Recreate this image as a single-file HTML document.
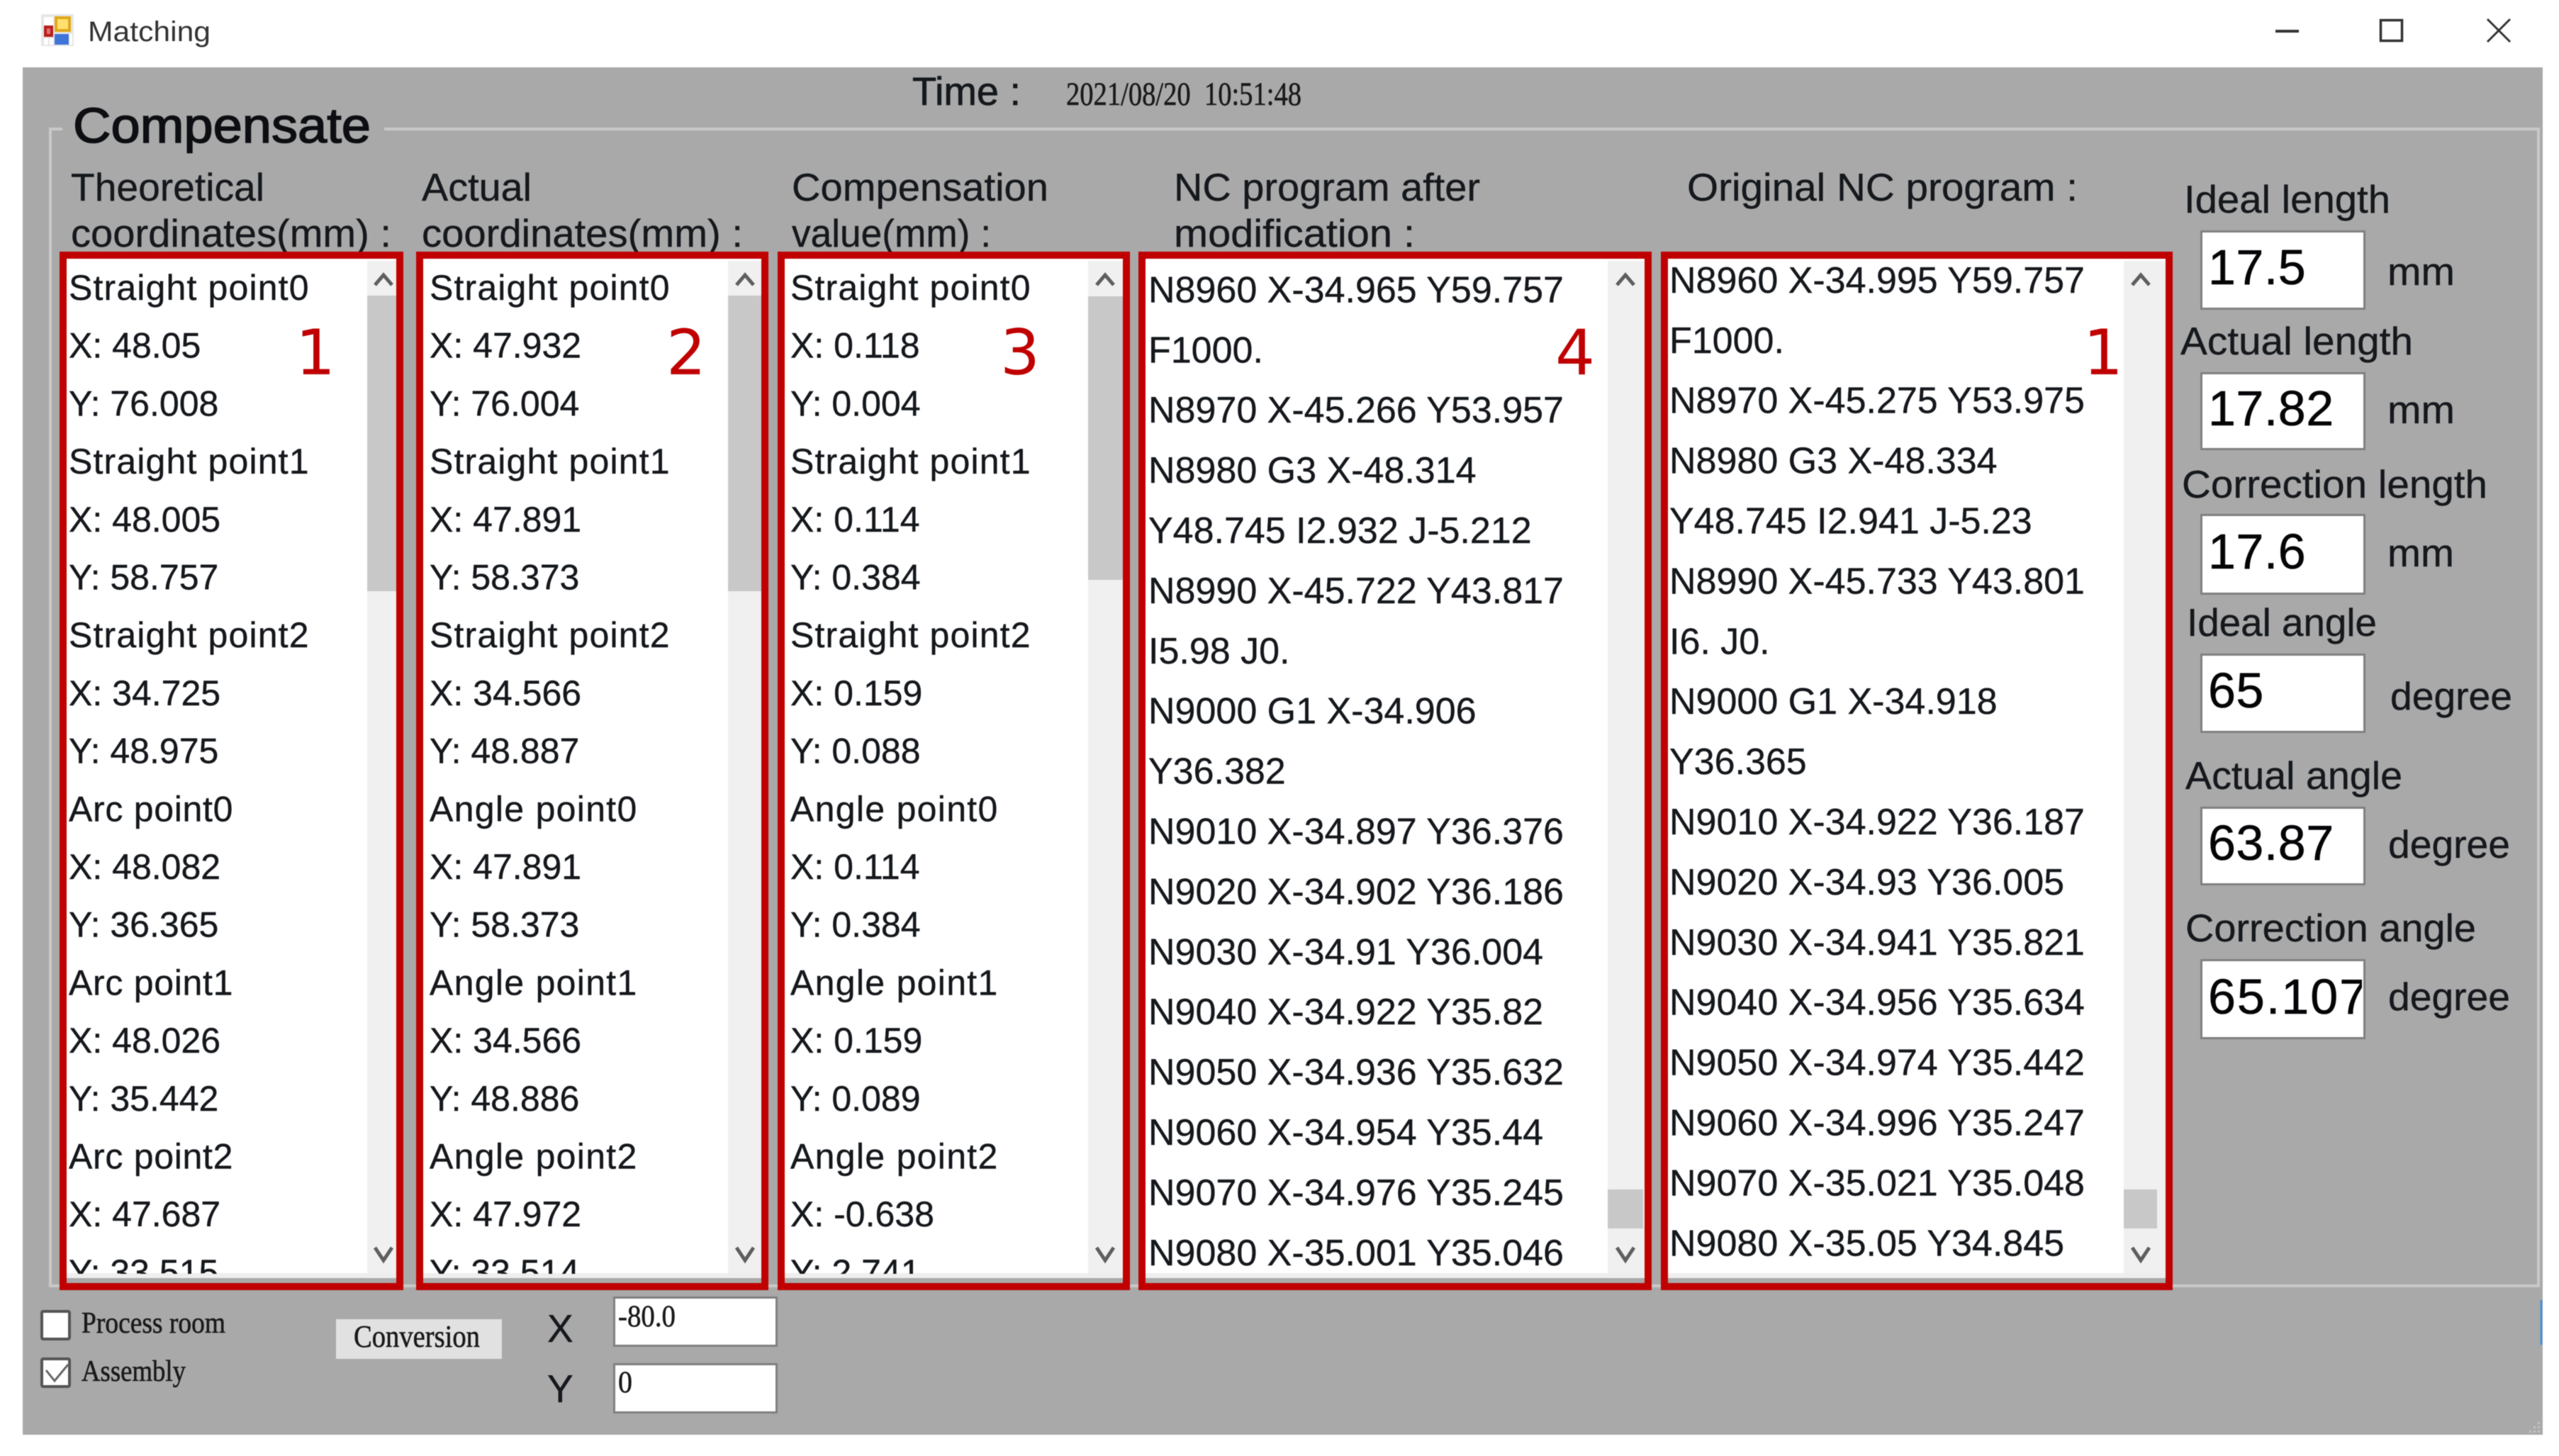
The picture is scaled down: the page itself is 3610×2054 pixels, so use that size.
<!DOCTYPE html>
<html>
<head>
<meta charset="utf-8">
<title>Matching</title>
<style>
html,body{margin:0;padding:0;background:#fff;width:3610px;height:2054px;overflow:hidden}
svg{display:block;filter:blur(.6px)}
text{font-family:"Liberation Sans",sans-serif;fill:#15181c;white-space:pre}
.s{font-family:"Liberation Serif",serif;fill:#1a1a1a;stroke:#1a1a1a;stroke-width:.6px}
.h{font-size:55px;stroke:#15181c;stroke-width:.4px}
.l{font-size:50px;stroke:#15181c;stroke-width:.4px}
.n{font-size:52px;stroke:#15181c;stroke-width:.4px}
.v{font-size:70px;fill:#050508;stroke:#050508;stroke-width:.6px}
.r{font-family:"DejaVu Sans",sans-serif;font-size:88px;fill:#c00000}
.a{letter-spacing:1.15px}
.b{letter-spacing:.7px}
.c{letter-spacing:1.3px}
</style>
</head>
<body>
<svg xmlns="http://www.w3.org/2000/svg" width="3610" height="2054" viewBox="0 0 3610 2054">
<defs>
<clipPath id="c1"><rect x="92" y="364" width="426" height="1433"/></clipPath>
<clipPath id="c2"><rect x="597" y="364" width="430" height="1433"/></clipPath>
<clipPath id="c3"><rect x="1107" y="364" width="428" height="1433"/></clipPath>
<clipPath id="c4"><rect x="1616" y="364" width="652" height="1433"/></clipPath>
<clipPath id="c5"><rect x="2353" y="364" width="643" height="1433"/></clipPath>
<clipPath id="c6"><rect x="3107" y="1356" width="225" height="107"/></clipPath>
</defs>

<!-- title bar -->
<rect x="0" y="0" width="3610" height="95" fill="#fff"/>
<rect x="58" y="20" width="46" height="45" fill="#e6e6e6"/>
<rect x="62" y="24" width="13" height="12" fill="#fff"/>
<rect x="62" y="36" width="13" height="16" fill="#b81c1c"/>
<rect x="66" y="40" width="5" height="8" fill="#e07070"/>
<rect x="62" y="54" width="6" height="9" fill="#fff"/>
<rect x="70" y="54" width="5" height="9" fill="#fff"/>
<rect x="77" y="23" width="23" height="22" fill="#e0a818"/>
<rect x="81" y="27" width="15" height="14" fill="#ffdf70"/>
<rect x="77" y="48" width="20" height="15" fill="#3f74d8"/>
<rect x="98" y="48" width="4" height="15" fill="#fff"/>
<text x="124" y="58" font-size="40" textLength="173" lengthAdjust="spacingAndGlyphs" style="fill:#333">Matching</text>
<path d="M3210 44H3243" stroke="#333" stroke-width="4" fill="none"/>
<rect x="3358.500" y="28.500" width="30" height="29" fill="none" stroke="#333" stroke-width="3.500"/>
<path d="M3509 27L3541 59M3541 27L3509 59" stroke="#333" stroke-width="3" fill="none"/>

<!-- form body -->
<rect x="32" y="95" width="3555" height="1929" fill="#a9a9a9"/>
<path d="M3585 1834V1897" stroke="#4a90d9" stroke-width="3"/>

<!-- group box -->
<path d="M88 182H71V1814H3581V182H542" fill="none" stroke="#c9c9c9" stroke-width="4"/>
<text x="103" y="201" font-size="70" textLength="420" lengthAdjust="spacingAndGlyphs" style="stroke:#0c0e12;stroke-width:1.6px;fill:#0c0e12">Compensate</text>

<text x="1287" y="148" font-size="56" textLength="153" lengthAdjust="spacingAndGlyphs" style="stroke:#15181c;stroke-width:.8px">Time :</text>
<text class="s" x="1504" y="148" font-size="47" textLength="332" lengthAdjust="spacingAndGlyphs">2021/08/20  10:51:48</text>

<!-- headers -->
<text class="h" x="100" y="283" textLength="273" lengthAdjust="spacingAndGlyphs">Theoretical</text>
<text class="h" x="100" y="348" textLength="452" lengthAdjust="spacingAndGlyphs">coordinates(mm) :</text>
<text class="h" x="595" y="283" textLength="155" lengthAdjust="spacingAndGlyphs">Actual</text>
<text class="h" x="595" y="348" textLength="453" lengthAdjust="spacingAndGlyphs">coordinates(mm) :</text>
<text class="h" x="1117" y="283" textLength="362" lengthAdjust="spacingAndGlyphs">Compensation</text>
<text class="h" x="1117" y="348" textLength="281" lengthAdjust="spacingAndGlyphs">value(mm) :</text>
<text class="h" x="1656" y="283" textLength="432" lengthAdjust="spacingAndGlyphs">NC program after</text>
<text class="h" x="1656" y="348" textLength="340" lengthAdjust="spacingAndGlyphs">modification :</text>
<text class="h" x="2380" y="283" textLength="551" lengthAdjust="spacingAndGlyphs">Original NC program :</text>

<!-- list whites -->
<rect x="94" y="364" width="465" height="1439" fill="#fff"/>
<rect x="597" y="364" width="477" height="1439" fill="#fff"/>
<rect x="1107" y="364" width="477" height="1439" fill="#fff"/>
<rect x="1616" y="364" width="704" height="1439" fill="#fff"/>
<rect x="2353" y="364" width="702" height="1439" fill="#fff"/>

<!-- bottom strips -->
<g fill="#eeeeee">
<rect x="94" y="1796" width="465" height="7"/>
<rect x="597" y="1796" width="477" height="7"/>
<rect x="1107" y="1796" width="477" height="7"/>
<rect x="1616" y="1796" width="704" height="7"/>
<rect x="2353" y="1796" width="702" height="7"/>
</g>

<!-- scrollbars -->
<g fill="#f0f0f0">
<rect x="518" y="368" width="41" height="1428"/>
<rect x="1027" y="368" width="47" height="1428"/>
<rect x="1535" y="368" width="49" height="1428"/>
<rect x="2268" y="368" width="52" height="1428"/>
<rect x="2996" y="368" width="59" height="1428"/>
</g>
<g fill="#c8c8c8">
<rect x="518" y="417" width="41" height="417"/>
<rect x="1027" y="417" width="47" height="417"/>
<rect x="1535" y="418" width="49" height="400"/>
<rect x="2268" y="1678" width="50" height="55"/>
<rect x="2996" y="1678" width="47" height="55"/>
</g>
<g fill="none" stroke="#5e5e5e" stroke-width="5">
<path d="M529 402L541 388L553 402M529 1760L541 1778L553 1760"/>
<path d="M1039 402L1051 388L1063 402M1039 1760L1051 1778L1063 1760"/>
<path d="M1547 402L1559 388L1571 402M1547 1760L1559 1778L1571 1760"/>
<path d="M2281 402L2293 388L2305 402M2281 1760L2293 1778L2305 1760"/>
<path d="M3008 402L3020 388L3032 402M3008 1760L3020 1778L3032 1760"/>
</g>

<!-- list 1 -->
<g clip-path="url(#c1)">
<text class="l" x="97" y="341.300">
<tspan class="a" x="97" dy="81.700">Straight point0</tspan><tspan x="97" dy="81.700">X: 48.05</tspan><tspan x="97" dy="81.700">Y: 76.008</tspan><tspan class="a" x="97" dy="81.700">Straight point1</tspan><tspan x="97" dy="81.700">X: 48.005</tspan><tspan x="97" dy="81.700">Y: 58.757</tspan><tspan class="a" x="97" dy="81.700">Straight point2</tspan><tspan x="97" dy="81.700">X: 34.725</tspan><tspan x="97" dy="81.700">Y: 48.975</tspan><tspan class="b" x="97" dy="81.700">Arc point0</tspan><tspan x="97" dy="81.700">X: 48.082</tspan><tspan x="97" dy="81.700">Y: 36.365</tspan><tspan class="b" x="97" dy="81.700">Arc point1</tspan><tspan x="97" dy="81.700">X: 48.026</tspan><tspan x="97" dy="81.700">Y: 35.442</tspan><tspan class="b" x="97" dy="81.700">Arc point2</tspan><tspan x="97" dy="81.700">X: 47.687</tspan><tspan x="97" dy="81.700">Y: 33.515</tspan>
</text>
</g>
<!-- list 2 -->
<g clip-path="url(#c2)">
<text class="l" x="606" y="341.300">
<tspan class="a" x="606" dy="81.700">Straight point0</tspan><tspan x="606" dy="81.700">X: 47.932</tspan><tspan x="606" dy="81.700">Y: 76.004</tspan><tspan class="a" x="606" dy="81.700">Straight point1</tspan><tspan x="606" dy="81.700">X: 47.891</tspan><tspan x="606" dy="81.700">Y: 58.373</tspan><tspan class="a" x="606" dy="81.700">Straight point2</tspan><tspan x="606" dy="81.700">X: 34.566</tspan><tspan x="606" dy="81.700">Y: 48.887</tspan><tspan class="c" x="606" dy="81.700">Angle point0</tspan><tspan x="606" dy="81.700">X: 47.891</tspan><tspan x="606" dy="81.700">Y: 58.373</tspan><tspan class="c" x="606" dy="81.700">Angle point1</tspan><tspan x="606" dy="81.700">X: 34.566</tspan><tspan x="606" dy="81.700">Y: 48.886</tspan><tspan class="c" x="606" dy="81.700">Angle point2</tspan><tspan x="606" dy="81.700">X: 47.972</tspan><tspan x="606" dy="81.700">Y: 33.514</tspan>
</text>
</g>
<!-- list 3 -->
<g clip-path="url(#c3)">
<text class="l" x="1115" y="341.300">
<tspan class="a" x="1115" dy="81.700">Straight point0</tspan><tspan x="1115" dy="81.700">X: 0.118</tspan><tspan x="1115" dy="81.700">Y: 0.004</tspan><tspan class="a" x="1115" dy="81.700">Straight point1</tspan><tspan x="1115" dy="81.700">X: 0.114</tspan><tspan x="1115" dy="81.700">Y: 0.384</tspan><tspan class="a" x="1115" dy="81.700">Straight point2</tspan><tspan x="1115" dy="81.700">X: 0.159</tspan><tspan x="1115" dy="81.700">Y: 0.088</tspan><tspan class="c" x="1115" dy="81.700">Angle point0</tspan><tspan x="1115" dy="81.700">X: 0.114</tspan><tspan x="1115" dy="81.700">Y: 0.384</tspan><tspan class="c" x="1115" dy="81.700">Angle point1</tspan><tspan x="1115" dy="81.700">X: 0.159</tspan><tspan x="1115" dy="81.700">Y: 0.089</tspan><tspan class="c" x="1115" dy="81.700">Angle point2</tspan><tspan x="1115" dy="81.700">X: -0.638</tspan><tspan x="1115" dy="81.700">Y: 2.741</tspan>
</text>
</g>
<!-- list 4 -->
<g clip-path="url(#c4)">
<text class="n" x="1620" y="341.500">
<tspan x="1620" dy="84.900">N8960 X-34.965 Y59.757</tspan><tspan x="1620" dy="84.900">F1000.</tspan><tspan x="1620" dy="84.900">N8970 X-45.266 Y53.957</tspan><tspan x="1620" dy="84.900">N8980 G3 X-48.314</tspan><tspan x="1620" dy="84.900">Y48.745 I2.932 J-5.212</tspan><tspan x="1620" dy="84.900">N8990 X-45.722 Y43.817</tspan><tspan x="1620" dy="84.900">I5.98 J0.</tspan><tspan x="1620" dy="84.900">N9000 G1 X-34.906</tspan><tspan x="1620" dy="84.900">Y36.382</tspan><tspan x="1620" dy="84.900">N9010 X-34.897 Y36.376</tspan><tspan x="1620" dy="84.900">N9020 X-34.902 Y36.186</tspan><tspan x="1620" dy="84.900">N9030 X-34.91 Y36.004</tspan><tspan x="1620" dy="84.900">N9040 X-34.922 Y35.82</tspan><tspan x="1620" dy="84.900">N9050 X-34.936 Y35.632</tspan><tspan x="1620" dy="84.900">N9060 X-34.954 Y35.44</tspan><tspan x="1620" dy="84.900">N9070 X-34.976 Y35.245</tspan><tspan x="1620" dy="84.900">N9080 X-35.001 Y35.046</tspan>
</text>
</g>
<!-- list 5 -->
<g clip-path="url(#c5)">
<text class="n" x="2355" y="328">
<tspan x="2355" dy="84.900">N8960 X-34.995 Y59.757</tspan><tspan x="2355" dy="84.900">F1000.</tspan><tspan x="2355" dy="84.900">N8970 X-45.275 Y53.975</tspan><tspan x="2355" dy="84.900">N8980 G3 X-48.334</tspan><tspan x="2355" dy="84.900">Y48.745 I2.941 J-5.23</tspan><tspan x="2355" dy="84.900">N8990 X-45.733 Y43.801</tspan><tspan x="2355" dy="84.900">I6. J0.</tspan><tspan x="2355" dy="84.900">N9000 G1 X-34.918</tspan><tspan x="2355" dy="84.900">Y36.365</tspan><tspan x="2355" dy="84.900">N9010 X-34.922 Y36.187</tspan><tspan x="2355" dy="84.900">N9020 X-34.93 Y36.005</tspan><tspan x="2355" dy="84.900">N9030 X-34.941 Y35.821</tspan><tspan x="2355" dy="84.900">N9040 X-34.956 Y35.634</tspan><tspan x="2355" dy="84.900">N9050 X-34.974 Y35.442</tspan><tspan x="2355" dy="84.900">N9060 X-34.996 Y35.247</tspan><tspan x="2355" dy="84.900">N9070 X-35.021 Y35.048</tspan><tspan x="2355" dy="84.900">N9080 X-35.05 Y34.845</tspan>
</text>
</g>

<!-- red frames -->
<g fill="none" stroke="#c00000" stroke-width="10">
<rect x="89" y="360" width="475" height="1455"/>
<rect x="592" y="360" width="487" height="1455"/>
<rect x="1102" y="360" width="487" height="1455"/>
<rect x="1611" y="360" width="714" height="1455"/>
<rect x="2348" y="360" width="712" height="1455"/>
</g>
<text class="r" x="417" y="528">1</text>
<text class="r" x="940" y="528">2</text>
<text class="r" x="1411" y="528">3</text>
<text class="r" x="2194" y="528">4</text>
<text class="r" x="2939" y="528">1</text>

<!-- right panel -->
<text class="h" x="3081" y="300" textLength="291" lengthAdjust="spacingAndGlyphs">Ideal length</text>
<text class="h" x="3076" y="500" textLength="328" lengthAdjust="spacingAndGlyphs">Actual length</text>
<text class="h" x="3078" y="702" textLength="431" lengthAdjust="spacingAndGlyphs">Correction length</text>
<text class="h" x="3085" y="897" textLength="268" lengthAdjust="spacingAndGlyphs">Ideal angle</text>
<text class="h" x="3083" y="1113" textLength="306" lengthAdjust="spacingAndGlyphs">Actual angle</text>
<text class="h" x="3083" y="1328" textLength="410" lengthAdjust="spacingAndGlyphs">Correction angle</text>

<g fill="#fff" stroke="#808080" stroke-width="3">
<rect x="3105.500" y="326.500" width="230" height="109"/>
<rect x="3105.500" y="526.500" width="230" height="107"/>
<rect x="3105.500" y="726.500" width="230" height="111"/>
<rect x="3105.500" y="923.500" width="230" height="109"/>
<rect x="3105.500" y="1139.500" width="230" height="108"/>
<rect x="3105.500" y="1354.500" width="230" height="110"/>
</g>
<text class="v" x="3115" y="401" style="letter-spacing:.5px">17.5</text>
<text class="v" x="3115" y="600" style="letter-spacing:.5px">17.82</text>
<text class="v" x="3115" y="802" style="letter-spacing:.5px">17.6</text>
<text class="v" x="3115" y="998" style="letter-spacing:.5px">65</text>
<text class="v" x="3115" y="1213" style="letter-spacing:.5px">63.87</text>
<g clip-path="url(#c6)"><text class="v" x="3115" y="1430" style="letter-spacing:2px">65.107</text></g>

<text class="h" x="3368" y="402" textLength="95" lengthAdjust="spacingAndGlyphs">mm</text>
<text class="h" x="3368" y="597" textLength="95" lengthAdjust="spacingAndGlyphs">mm</text>
<text class="h" x="3368" y="799" textLength="94" lengthAdjust="spacingAndGlyphs">mm</text>
<text class="h" x="3372" y="1001" textLength="172" lengthAdjust="spacingAndGlyphs">degree</text>
<text class="h" x="3369" y="1210" textLength="172" lengthAdjust="spacingAndGlyphs">degree</text>
<text class="h" x="3369" y="1425" textLength="172" lengthAdjust="spacingAndGlyphs">degree</text>

<!-- bottom controls -->
<rect x="59" y="1850" width="39" height="39" rx="2" fill="#fff" stroke="#555" stroke-width="4"/>
<rect x="59" y="1917" width="39" height="39" rx="2" fill="#fff" stroke="#555" stroke-width="4"/>
<path d="M65 1933L77 1948L96 1925" fill="none" stroke="#666" stroke-width="3"/>
<text class="s" x="115" y="1880" font-size="42" textLength="203" lengthAdjust="spacingAndGlyphs">Process room</text>
<text class="s" x="115" y="1948" font-size="42" textLength="147" lengthAdjust="spacingAndGlyphs">Assembly</text>
<rect x="474" y="1861" width="234" height="56" fill="#e1e1e1"/>
<text class="s" x="499" y="1900" font-size="44" textLength="178" lengthAdjust="spacingAndGlyphs">Conversion</text>
<text class="h" x="772" y="1893">X</text>
<text class="h" x="772" y="1978">Y</text>
<rect x="866.500" y="1830.500" width="229" height="68" fill="#fff" stroke="#808080" stroke-width="3"/>
<rect x="866.500" y="1924.500" width="229" height="68" fill="#fff" stroke="#808080" stroke-width="3"/>
<text class="s" x="872" y="1871" font-size="43" textLength="81" lengthAdjust="spacingAndGlyphs">-80.0</text>
<text class="s" x="872" y="1964" font-size="43" textLength="20" lengthAdjust="spacingAndGlyphs">0</text>

<!-- resize grip -->
<g fill="#c4c4c4">
<rect x="3580" y="2006" width="3" height="3"/>
<rect x="3574" y="2012" width="3" height="3"/><rect x="3580" y="2012" width="3" height="3"/>
<rect x="3568" y="2018" width="3" height="3"/><rect x="3574" y="2018" width="3" height="3"/><rect x="3580" y="2018" width="3" height="3"/>
</g>
</svg>
</body>
</html>
